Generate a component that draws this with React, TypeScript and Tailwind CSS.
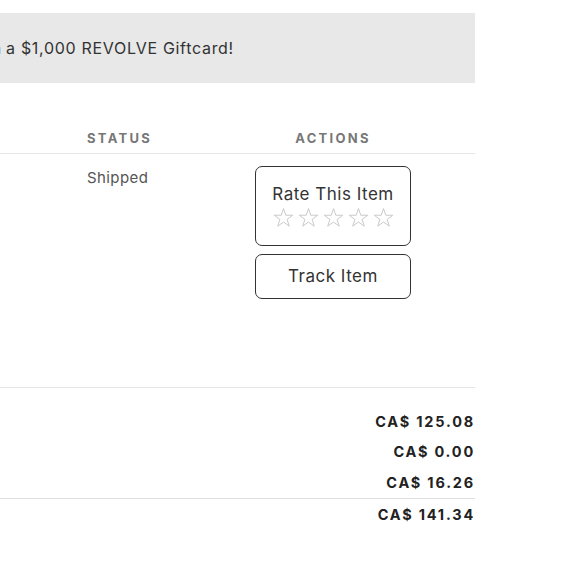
import React from "react";

function Star() {
  return (
    <svg width="21" height="21" viewBox="0 0 24 24" fill="none" stroke="#c8c8c8" strokeWidth="1.1" strokeLinejoin="miter">
      <path d="M12 1.8l2.6 7.6h8l-6.5 4.8 2.5 7.7L12 17.2l-6.6 4.7 2.5-7.7L1.4 9.4h8z" />
    </svg>
  );
}

export default function App() {
  return (
    <div className="w-[580px] h-[580px] bg-white font-['Inter',sans-serif] text-[#333]">
      <div className="w-[475px] pt-[13px]">
        <div className="h-[70px] bg-[#e8e8e8] flex items-center overflow-hidden">
          <div className="w-[6px] shrink-0 flex justify-end">
            <span className="whitespace-nowrap shrink-0 mr-[4px] text-[16px] tracking-[0.7px] text-[#333]">Enter to win</span>
          </div>
          <span className="whitespace-nowrap text-[16px] tracking-[0.7px] text-[#333]">a $1,000 REVOLVE Giftcard!</span>
        </div>

        <div className="mt-[47px] flex h-[24px] items-start border-b border-[#e6e6e6]">
          <div className="w-[87px]" />
          <div className="w-[168px] text-[13px] font-bold tracking-[2.3px] text-[#777] leading-[16px]">STATUS</div>
          <div className="w-[156px] text-center text-[13px] font-bold tracking-[2.3px] text-[#777] leading-[16px]">ACTIONS</div>
        </div>

        <div className="flex h-[234px] border-b border-[#e6e6e6]">
          <div className="w-[87px]" />
          <div className="w-[168px] pt-[15px] text-[15px] tracking-[0.4px] text-[#555] leading-[18px]">Shipped</div>
          <div className="w-[156px] pt-[12px] flex flex-col gap-[8px]">
            <div className="h-[80px] border-[1.5px] border-[#333] rounded-[7px] flex flex-col items-center pt-[16px]">
              <div className="text-[17px] tracking-[0.5px] leading-[22px] text-[#333]">Rate This Item</div>
              <div className="flex gap-[4px] mt-[2px]">
                <Star />
                <Star />
                <Star />
                <Star />
                <Star />
              </div>
            </div>
            <div className="h-[45px] border-[1.5px] border-[#333] rounded-[7px] flex items-center justify-center text-[17px] tracking-[0.5px] text-[#333]">
              Track Item
            </div>
          </div>
        </div>

        <div className="pt-[25px] flex flex-col items-end text-[14.5px] font-bold tracking-[1.8px] text-[#222]">
          <div className="h-[30px] leading-[18px]">CA$ 125.08</div>
          <div className="h-[31px] leading-[18px]">CA$ 0.00</div>
          <div className="h-[24px] leading-[18px]">CA$ 16.26</div>
        </div>
        <div className="border-t border-[#e0e0e0] pt-[7px] flex justify-end text-[14.5px] font-bold tracking-[1.8px] text-[#222]">
          <div className="leading-[18px]">CA$ 141.34</div>
        </div>
      </div>
    </div>
  );
}
